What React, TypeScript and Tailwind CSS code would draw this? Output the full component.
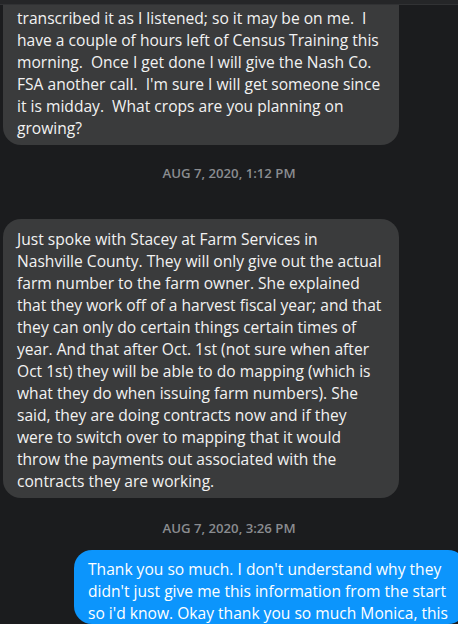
const FIRST = [
  "transcribed it as I listened; so it may be on me.  I",
  "have a couple of hours left of Census Training this",
  "morning.  Once I get done I will give the Nash Co.",
  "FSA another call.  I'm sure I will get someone since",
  "it is midday.  What crops are you planning on",
  "growing?",
];

const SECOND = [
  "Just spoke with Stacey at Farm Services in",
  "Nashville County. They will only give out the actual",
  "farm number to the farm owner. She explained",
  "that they work off of a harvest fiscal year; and that",
  "they can only do certain things certain times of",
  "year. And that after Oct. 1st (not sure when after",
  "Oct 1st) they will be able to do mapping (which is",
  "what they do when issuing farm numbers). She",
  "said, they are doing contracts now and if they",
  "were to switch over to mapping that it would",
  "throw the payments out associated with the",
  "contracts they are working.",
];

const MINE = [
  "Thank you so much. I don't understand why they",
  "didn't just give me this information from the start",
  "so i'd know. Okay thank you so much Monica, this",
];

function Lines({ lines }: { lines: string[] }) {
  return (
    <>
      {lines.map((l, i) => (
        <div key={i} className="whitespace-pre">
          {l}
        </div>
      ))}
    </>
  );
}

function Stamp({ text }: { text: string }) {
  return (
    <div className="text-center text-[13.2px] font-semibold leading-[18px] text-[#8a8c90]">{text}</div>
  );
}

export default function App() {
  return (
    <div
      className="flex h-[624px] w-[458px] flex-col overflow-hidden bg-[#1b1c1e] text-[15.6px] leading-[22px] text-[#f2f2f2]"
      style={{ fontFamily: '"Open Sans", "Noto Sans", sans-serif' }}
    >
      <div className="h-[5px] shrink-0 border-b border-[#313234] bg-[#252628]" />

      <div className="ml-[3px] w-[396px] rounded-b-[18px] bg-[#3a3b3c] pb-[6px] pl-[14px] pt-[2px]">
        <Lines lines={FIRST} />
      </div>

      <div className="mt-[19px]">
        <Stamp text="AUG 7, 2020, 1:12 PM" />
      </div>

      <div className="ml-[3px] mt-[37px] w-[396px] rounded-[18px] bg-[#3a3b3c] pb-[6px] pl-[14px] pt-[9px]">
        <Lines lines={SECOND} />
      </div>

      <div className="mt-[21px]">
        <Stamp text="AUG 7, 2020, 3:26 PM" />
      </div>

      <div className="ml-[74px] mt-[13px] w-[392px] shrink-0 rounded-[18px] bg-[#0c95fc] pl-[14px] pt-[8px] text-white">
        <Lines lines={MINE} />
      </div>
    </div>
  );
}
